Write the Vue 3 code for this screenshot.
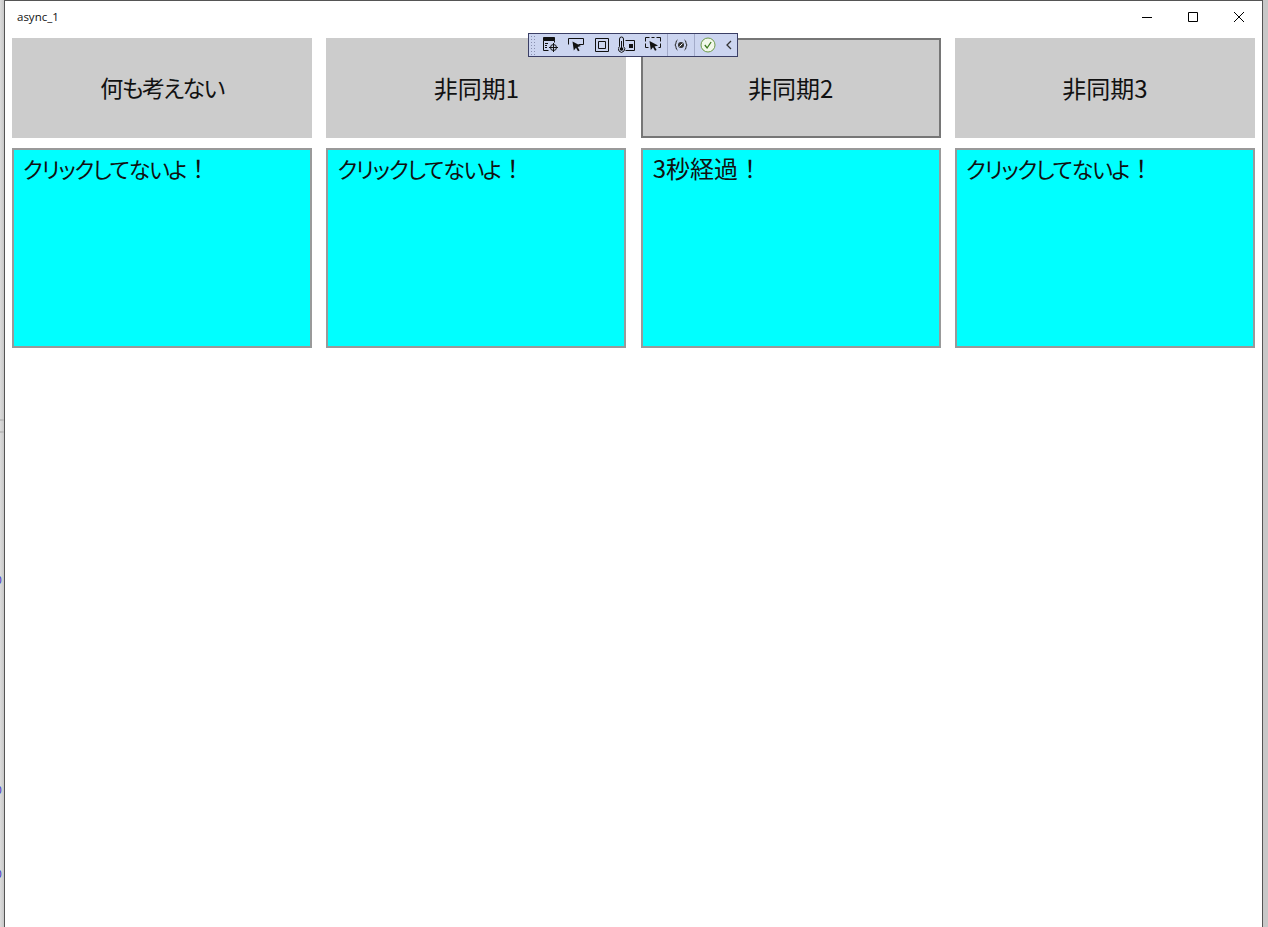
<template>
  <div class="desktop">
    <div class="behind">
      <i class="rule" style="top: 419px"></i>
      <i class="rule" style="top: 431px"></i>
      <span class="digit" style="top: 575px">0</span>
      <span class="digit" style="top: 785px">0</span>
      <span class="digit" style="top: 869px">0</span>
    </div>
    <div class="window">
      <header class="titlebar">
        <span class="title">async_1</span>
        <div class="caption">
          <svg width="12" height="12" viewBox="0 0 12 12"><path d="M1 6.500h10" stroke="#000" fill="none" /></svg>
          <svg width="12" height="12" viewBox="0 0 12 12"><path d="M1.500 1.500h9v9h-9z" stroke="#000" fill="none" /></svg>
          <svg width="12" height="12" viewBox="0 0 12 12"><path d="M1 1l10 10M11 1L1 11" stroke="#000" fill="none" /></svg>
        </div>
      </header>
      <main class="grid">
        <button
          v-for="(b, i) in buttons"
          :key="b"
          class="btn"
          :class="{ focused: i === 2, kana: i === 0 }"
        >{{ b }}</button>
        <div v-for="(m, i) in messages" :key="i" class="box">
          <span :class="{ narrow: m.narrow }">{{ m.text }}</span>！
        </div>
      </main>

      <div class="toolbar">
        <span class="grip"></span>
        <span class="tool">
          <svg width="18" height="18" viewBox="0 0 18 18" fill="none" stroke="#111">
            <path d="M1.500 1.500h11v3h-11z" fill="#111" />
            <path d="M1.500 4.500v10h5M12.500 4.500v2" />
            <path d="M3 7.500h3M3 9.500h2M3 11.500h2" />
            <circle cx="11.500" cy="11.500" r="3" />
            <path d="M11.500 7v9M7 11.500h9" />
          </svg>
        </span>
        <span class="tool">
          <svg width="18" height="18" viewBox="0 0 18 18" fill="none" stroke="#111">
            <path d="M1.500 8.500v-6h15v6h-5" />
            <path d="M5.500 5.500l8.500 4.500-3.400 1 2 3.500-1.600.8-2-3.500L6.800 14.500z" fill="#111" stroke="none" />
          </svg>
        </span>
        <span class="tool">
          <svg width="16" height="16" viewBox="0 0 16 16" fill="none" stroke="#111">
            <path d="M1.500 1.500h13v13h-13zM4.500 4.500h7v7h-7z" />
          </svg>
        </span>
        <span class="tool">
          <svg width="18" height="18" viewBox="0 0 18 18" fill="none" stroke="#111">
            <path d="M1.500 10.500V3a2 2 0 0 1 4 0v7.500a3.200 3.200 0 1 1-4 0z" />
            <circle cx="3.500" cy="13" r="1.800" fill="#111" stroke="none" />
            <path d="M3.500 5v7" />
            <path d="M7.500 4.500h9v10h-9" />
            <path d="M11 8h4v4h-4z" fill="#111" stroke="none" />
          </svg>
        </span>
        <span class="tool">
          <svg width="18" height="18" viewBox="0 0 18 18" fill="none" stroke="#111">
            <path d="M1.500 5.500v-4h4M12.500 1.500h4v4M1.500 7.500v4h3M16.500 7.500v4h-2M7.500 1.500h3" />
            <path d="M5.500 5l8.500 4.500-3.400 1 2 3.500-1.600.8-2-3.500L6.800 14z" fill="#111" stroke="none" />
          </svg>
        </span>
        <span class="sep"></span>
        <span class="tool small">
          <svg width="14" height="14" viewBox="0 0 14 14" fill="none" stroke="#222">
            <path d="M3.500 2C1.500 2.500 2.500 6 1 7c1.500 1 .5 4.500 2.500 5M10.500 2c2 .5 1 4 2.500 5-1.500 1-.5 4.500-2.500 5" />
            <circle cx="7" cy="7" r="3" fill="#333" stroke="none" />
            <path d="M5.500 8.500l3-3" stroke="#fff" />
          </svg>
        </span>
        <span class="sep"></span>
        <span class="tool check">
          <svg width="16" height="16" viewBox="0 0 16 16" fill="none">
            <circle cx="8" cy="8" r="7" fill="#f2f8ea" stroke="#6d9a4a" />
            <path d="M4.800 8l2.300 3 4-6" stroke="#3c7a1f" stroke-width="1.300" />
          </svg>
        </span>
        <span class="chev">
          <svg width="8" height="10" viewBox="0 0 8 10" fill="none" stroke="#333" stroke-width="1.300"><path d="M6 1L2 5l4 4" /></svg>
        </span>
      </div>
    </div>
  </div>
</template>

<script setup>
const buttons = ['何も考えない', '非同期1', '非同期2', '非同期3']
const messages = [
  { text: 'クリックしてないよ', narrow: true },
  { text: 'クリックしてないよ', narrow: true },
  { text: '3秒経過', narrow: false },
  { text: 'クリックしてないよ', narrow: true },
]
</script>

<style>
html,
body {
  margin: 0;
  background: #fff;
  overflow: hidden;
}
</style>

<style scoped>
.desktop {
  position: relative;
  width: 1268px;
  height: 927px;
  padding: 0 5px 0 4px;
  box-sizing: border-box;
  background: linear-gradient(to right, #dcdcdc, #c8c8c8 4px);
  overflow: hidden;
  font-family: "Noto Sans CJK JP", "Open Sans", sans-serif;
}

.behind {
  position: absolute;
  left: 0;
  top: 0;
  width: 4px;
  height: 100%;
  overflow: hidden;
}

.rule {
  position: absolute;
  left: 0;
  width: 4px;
  height: 2px;
  background: #bdbdbd;
}

.digit {
  position: absolute;
  left: -4px;
  font: 10px/12px "Liberation Sans", sans-serif;
  color: #2222cc;
}

.window {
  position: relative;
  height: 100%;
  box-sizing: border-box;
  background: #fff;
  border: 1px solid #555;
  border-bottom: 0;
}

.titlebar {
  display: flex;
  align-items: center;
  justify-content: space-between;
  height: 31px;
  padding-left: 12px;
}

.title {
  font: 11.500px "Open Sans", sans-serif;
  color: #111;
}

.caption {
  display: flex;
  gap: 34px;
  padding-right: 17px;
}

.grid {
  display: grid;
  grid-template-columns: repeat(4, 300px);
  grid-template-rows: 100px 200px;
  column-gap: 14.33px;
  row-gap: 10px;
  margin-top: 6px;
  padding-left: 7px;
}

.btn {
  border: 2px solid transparent;
  background: #ccc;
  color: #111;
  font-family: inherit;
  font-size: 24px;
  padding: 0 0 2px;
}

.btn.kana {
  font-size: 23px;
  font-feature-settings: "palt";
  letter-spacing: -1.600px;
}

.btn.focused {
  border-color: #767676;
}

.box {
  box-sizing: border-box;
  background: #0ff;
  border: 2px solid #999;
  padding: 1px 10px;
  font-size: 24px;
  line-height: 34px;
  color: #111;
}

.narrow {
  margin-left: -1px;
  font-size: 22px;
  font-feature-settings: "palt";
  letter-spacing: -1.200px;
}

.toolbar {
  position: absolute;
  left: 523px;
  top: 32px;
  display: flex;
  align-items: center;
  width: 210px;
  height: 24px;
  box-sizing: border-box;
  background: #ccd5f0;
  border: 1px solid #3b3f66;
}

.grip {
  width: 7px;
  height: 20px;
  margin: 0 1px;
  background-image: radial-gradient(#8a90b0 0.8px, transparent 0.9px);
  background-size: 3px 3px;
}

.tool {
  display: flex;
  justify-content: center;
  width: 25.500px;
}

.tool.small {
  width: 26px;
}

.tool.check {
  width: 27px;
}

.sep {
  width: 1px;
  height: 22px;
  margin-left: 1px;
  background: #a3abc9;
}

.tool.small + .sep {
  margin-left: 0;
}

.chev {
  display: flex;
  margin-left: 3px;
}
</style>
